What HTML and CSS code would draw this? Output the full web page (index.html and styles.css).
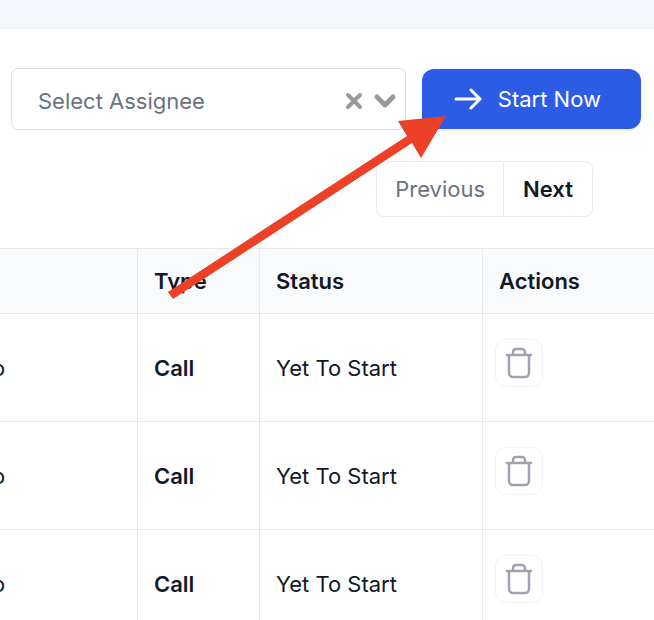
FILE: index.html
```
<!DOCTYPE html>
<html lang="en">
<head>
    <meta charset="UTF-8">
    <meta name="viewport" content="width=device-width, initial-scale=1.0">
    <title>Tasks</title>
    <link rel="stylesheet" href="styles.css">
</head>
<body>
    <header class="topbar"></header>
    <main>
        <div class="toolbar">
            <div class="assignee">
                <select class="assignee-select" aria-label="Select Assignee">
                    <option>Select Assignee</option>
                </select>
                <button class="clear" type="button" aria-label="Clear">
                    <svg width="18" height="18" viewBox="0 0 18 18"><path d="M3 3l12 12M15 3L3 15"/></svg>
                </button>
                <svg class="chevron" width="24" height="18" viewBox="0 0 24 18"><path d="M4 5l8 8 8-8"/></svg>
            </div>
            <button class="start" type="button">
                <svg width="28" height="22" viewBox="0 0 28 22"><path d="M2 11h24M17 2l9 9-9 9"/></svg>
                Start Now
            </button>
        </div>

        <nav class="pager" aria-label="Pagination">
            <button class="previous" type="button">Previous</button>
            <button class="next" type="button">Next</button>
        </nav>

        <table class="tasks">
            <colgroup>
                <col class="col-name">
                <col class="col-type">
                <col class="col-status">
                <col>
            </colgroup>
            <thead>
                <tr><th></th><th>Type</th><th>Status</th><th>Actions</th></tr>
            </thead>
            <tbody>
                <tr>
                    <td>o</td>
                    <td class="type">Call</td>
                    <td>Yet To Start</td>
                    <td class="actions"><button class="delete" type="button" aria-label="Delete"><svg width="28" height="32" viewBox="0 0 28 32"><path d="M2 8h24M4 8v18a4 4 0 0 0 4 4h12a4 4 0 0 0 4-4V8M8 8V5a3 3 0 0 1 3-3h6a3 3 0 0 1 3 3v3"/></svg></button></td>
                </tr>
                <tr>
                    <td>o</td>
                    <td class="type">Call</td>
                    <td>Yet To Start</td>
                    <td class="actions"><button class="delete" type="button" aria-label="Delete"><svg width="28" height="32" viewBox="0 0 28 32"><path d="M2 8h24M4 8v18a4 4 0 0 0 4 4h12a4 4 0 0 0 4-4V8M8 8V5a3 3 0 0 1 3-3h6a3 3 0 0 1 3 3v3"/></svg></button></td>
                </tr>
                <tr>
                    <td>o</td>
                    <td class="type">Call</td>
                    <td>Yet To Start</td>
                    <td class="actions"><button class="delete" type="button" aria-label="Delete"><svg width="28" height="32" viewBox="0 0 28 32"><path d="M2 8h24M4 8v18a4 4 0 0 0 4 4h12a4 4 0 0 0 4-4V8M8 8V5a3 3 0 0 1 3-3h6a3 3 0 0 1 3 3v3"/></svg></button></td>
                </tr>
            </tbody>
        </table>
    </main>

    <!-- arrow pointing at the start button -->
    <svg class="pointer" width="280" height="186" viewBox="0 0 280 186" aria-hidden="true">
        <path d="M2 176L241 20L232 5L280 0L255 42L246 27L7 183Z"/>
    </svg>
</body>
</html>
```

FILE: styles.css
```
* { box-sizing: border-box; }
body { margin: 0; height: 100vh; overflow: hidden; position: relative; background-color: #fff; color: #111827; font-family: Inter, sans-serif; font-size: 22px; line-height: 32px; }
button, select { font: inherit; cursor: pointer; }
svg { display: block; fill: none; stroke: currentColor; stroke-linecap: round; stroke-linejoin: round; }

.topbar { height: 29px; background-color: #f3f6fa; }

.toolbar { display: flex; gap: 16px; padding: 39px 13px 0 11px; }
.assignee { flex: 1; display: flex; align-items: center; height: 62px; padding: 4px 8px 0 26px; border: 1px solid #dcdee4; border-radius: 7px; color: #999; }
.assignee-select { flex: 1; min-width: 0; padding: 0; border: none; appearance: none; background: none; color: #6b7280; }
.clear { padding: 0; margin-right: 10px; border: none; background: none; color: inherit; }
.clear svg { stroke-width: 4; }
.chevron { stroke-width: 5; }
.start { display: flex; align-items: center; gap: 16px; height: 60px; margin-top: 1px; padding: 0 40px 0 32px; border: none; border-radius: 12px; background-color: #2c5ce6; color: #fff; box-shadow: 0 1px 3px rgba(0, 0, 0, 0.1); }
.start svg { stroke-width: 3; }

.pager { display: flex; justify-content: flex-end; padding: 31px 61px 31px 0; }
.pager button { height: 56px; padding: 0 19px; border: 1px solid #e7e9ed; background-color: #fff; }
.pager .previous { padding: 0 18px; border-right: none; border-radius: 8px 0 0 8px; color: #6b7280; }
.pager .next { border-radius: 0 8px 8px 0; color: #111827; font-weight: 600; }

/* the first column starts beyond the left edge */
.tasks { width: calc(100% + 24px); margin-left: -24px; table-layout: fixed; border-spacing: 0; border-top: 1px solid #e7e9ed; }
.col-name { width: 162px; }
.col-type { width: 122px; }
.col-status { width: 223px; }
.tasks th, .tasks td { padding: 0 16px; border-right: 1px solid #e7e9ed; border-bottom: 1px solid #e7e9ed; text-align: left; }
.tasks th { height: 65px; background-color: #f9fafb; font-weight: 600; }
.tasks td { height: 108px; }
.tasks th:last-child, .tasks td:last-child { border-right: none; }
.tasks .type { font-weight: 600; }
.tasks .actions { padding: 25px 12px 0; vertical-align: top; }
.delete { display: flex; align-items: center; justify-content: center; width: 48px; height: 48px; padding: 0; border: 1px solid #f1f2f4; border-radius: 11px; background-color: #fff; color: #a0a3af; }
.delete svg { stroke-width: 2.5; }

.pointer { position: absolute; left: 166px; top: 116px; fill: #ec4127; stroke: none; pointer-events: none; }
```
